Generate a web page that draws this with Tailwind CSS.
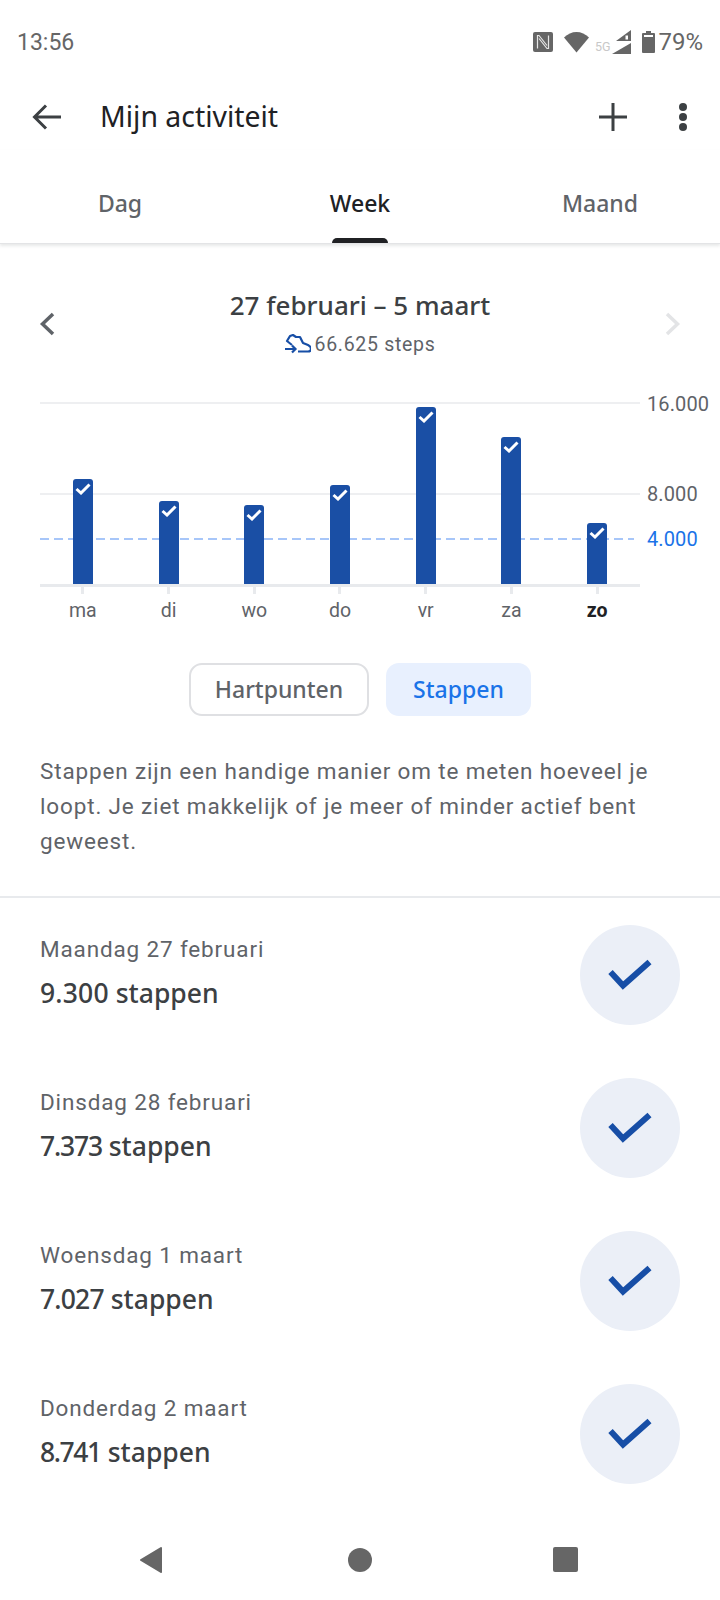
<!DOCTYPE html>
<html lang="en">
<head>
    <meta charset="UTF-8">
    <title>Mijn activiteit</title>
    <script src="https://cdn.jsdelivr.net/npm/@tailwindcss/browser@4"></script>
</head>
<body class="bg-white font-['Roboto',sans-serif] text-[#5f6368]">
<div class="w-[720px] h-[1600px] overflow-hidden relative">
    <!-- Status bar -->
    <div class="h-[84px] flex items-center justify-between pl-[17px] pr-[17px] text-[#666666]">
        <span class="text-[23px] mt-[3px]">13:56</span>
        <div class="flex items-center">
            <svg width="20" height="20" viewBox="0 0 20 20" class="mr-[11px]"><rect width="20" height="20" rx="2" fill="#666"/><path d="M4.500 16.500V3.500h1.500l8 10M15.500 3.500v13H14l-8-10" stroke="#e6e6e6" stroke-width="1.200" fill="none"/></svg>
            <svg width="25" height="22" viewBox="0 0 25 22" class="mr-[6px]"><path d="M0 6.500C3.500 3 8 1 12.500 1S21.500 3 25 6.500L12.500 21.500Z" fill="#666"/></svg>
            <span class="text-[12.5px] leading-[14px] text-[#c8c8c8] mt-[10px] mr-[2px]">5G</span>
            <svg width="19" height="24" viewBox="0 0 19 24" class="mr-[11px]"><path d="M19 0v11H4ZM13.500 5.500h2.500v4h-2.500Z" fill="#666" fill-rule="evenodd"/><path d="M19 13v11H0Z" fill="#666"/></svg>
            <svg width="13" height="22" viewBox="0 0 13 22" class="mr-[2px]"><path d="M4 0h5v2h3a1 1 0 0 1 1 1v18a1 1 0 0 1-1 1H1a1 1 0 0 1-1-1V3a1 1 0 0 1 1-1h3Z" fill="#666"/><rect x="2" y="4" width="9" height="2" fill="#fff"/></svg>
            <span class="text-[24px] ml-[1px]">79%</span>
        </div>
    </div>

    <!-- Toolbar -->
    <div class="h-[66px] flex items-center relative">
        <svg width="32" height="32" viewBox="0 0 32 32" class="ml-[31px]"><path d="M30 16H4M15 4.500 3.500 16 15 27.500" stroke="#3c4043" stroke-width="3" fill="none"/></svg>
        <h1 class="ml-[37px] mt-[-2px] text-[28.4px] text-[#202124] font-['Noto_Sans',sans-serif]">Mijn activiteit</h1>
        <div class="ml-auto flex items-center">
            <svg width="30" height="30" viewBox="0 0 30 30" class="mr-[51px]"><path d="M15 1v28M1 15h28" stroke="#3c4043" stroke-width="3" fill="none"/></svg>
            <div class="flex flex-col gap-[2px] mr-[33px]">
                <span class="w-[8px] h-[8px] rounded-full bg-[#3c4043]"></span>
                <span class="w-[8px] h-[8px] rounded-full bg-[#3c4043]"></span>
                <span class="w-[8px] h-[8px] rounded-full bg-[#3c4043]"></span>
            </div>
        </div>
    </div>

    <!-- Tabs -->
    <div class="relative h-[94px] pt-[13px] grid grid-cols-3 items-center text-center text-[23px] font-medium font-['Noto_Sans',sans-serif] border-b border-[#e3e4e6] shadow-[0_2px_3px_rgba(60,64,67,0.12)]">
        <span class="text-[#5f6368]">Dag</span>
        <span class="text-[#202124]">Week</span>
        <span class="text-[#5f6368]">Maand</span>
        <span class="absolute left-[332px] bottom-0 w-[56px] h-[5px] rounded-t-[5px] bg-[#202124]"></span>
    </div>

    <!-- Date range -->
    <div class="relative h-[146px] flex flex-col items-center">
        <p class="mt-[43px] text-[26px] leading-[36px] text-[#3c4043] font-medium font-['Noto_Sans',sans-serif]">27 februari – 5 maart</p>
        <div class="mt-[7px] flex items-center">
            <svg width="26" height="22" viewBox="0 0 26 22" class="mr-[4px]"><path d="M7 11 2 7l3-5 3-1 3 2h4l3 6 5 2c2 1 3 2.500 3 4 0 2-1 2.500-3 2.500H13" stroke="#174ea6" stroke-width="2.200" fill="none" stroke-linejoin="round"/><path d="M0 15h10M7 11.500 10.500 15 7 18.500" stroke="#174ea6" stroke-width="2.200" fill="none"/></svg>
            <span class="text-[19.5px] tracking-[0.7px]">66.625 steps</span>
        </div>
        <svg width="16" height="24" viewBox="0 0 16 24" class="absolute left-[39px] top-[68px]"><path d="M14 2 3.500 12 14 22" stroke="#5f6368" stroke-width="3.500" fill="none"/></svg>
        <svg width="16" height="24" viewBox="0 0 16 24" class="absolute left-[665px] top-[68px]"><path d="M2 2 12.500 12 2 22" stroke="#e3e4e6" stroke-width="3.500" fill="none"/></svg>
    </div>

    <!-- Chart -->
    <div class="relative h-[240px]">
        <div class="absolute left-[40px] top-[12px] w-[600px] h-[2px] bg-[#eeeff1]"></div>
        <div class="absolute left-[40px] top-[103px] w-[600px] h-[2px] bg-[#eeeff1]"></div>
        <svg width="594" height="2" class="absolute left-[40px] top-[148px]"><line x1="0" y1="1" x2="594" y2="1" stroke="#8ab4f8" stroke-width="1.500" stroke-dasharray="9 5"/></svg>
        <div class="absolute left-[40px] top-[194px] w-[600px] h-[3px] bg-[#e8eaed]"></div>

        <span class="absolute left-[647px] top-[2px] text-[20px] leading-[24px] tracking-[0.1px]">16.000</span>
        <span class="absolute left-[647px] top-[92px] text-[20px] leading-[24px] tracking-[0.1px]">8.000</span>
        <span class="absolute left-[647px] top-[137px] text-[20px] leading-[24px] tracking-[0.1px] text-[#1a73e8]">4.000</span>

        <div class="absolute left-[40px] top-0 w-[600px] grid grid-cols-7 text-center text-[19.5px] leading-[24px]">
            <div class="flex flex-col items-center">
                <div class="h-[194px] flex items-end">
                    <div class="w-[20px] h-[105px] rounded-t-[3px] bg-[#1a4fa5] flex justify-center pt-[3px]"><svg width="16" height="13" viewBox="0 0 16 13"><path d="M1.500 7 6 11 14.500 2.500" stroke="#fff" stroke-width="3" fill="none"/></svg></div>
                </div>
                <div class="mt-[3px] w-[3px] h-[7px] bg-[#e8eaed]"></div>
                <span class="mt-[5px]">ma</span>
            </div>
            <div class="flex flex-col items-center">
                <div class="h-[194px] flex items-end">
                    <div class="w-[20px] h-[83px] rounded-t-[3px] bg-[#1a4fa5] flex justify-center pt-[3px]"><svg width="16" height="13" viewBox="0 0 16 13"><path d="M1.500 7 6 11 14.500 2.500" stroke="#fff" stroke-width="3" fill="none"/></svg></div>
                </div>
                <div class="mt-[3px] w-[3px] h-[7px] bg-[#e8eaed]"></div>
                <span class="mt-[5px]">di</span>
            </div>
            <div class="flex flex-col items-center">
                <div class="h-[194px] flex items-end">
                    <div class="w-[20px] h-[79px] rounded-t-[3px] bg-[#1a4fa5] flex justify-center pt-[3px]"><svg width="16" height="13" viewBox="0 0 16 13"><path d="M1.500 7 6 11 14.500 2.500" stroke="#fff" stroke-width="3" fill="none"/></svg></div>
                </div>
                <div class="mt-[3px] w-[3px] h-[7px] bg-[#e8eaed]"></div>
                <span class="mt-[5px]">wo</span>
            </div>
            <div class="flex flex-col items-center">
                <div class="h-[194px] flex items-end">
                    <div class="w-[20px] h-[99px] rounded-t-[3px] bg-[#1a4fa5] flex justify-center pt-[3px]"><svg width="16" height="13" viewBox="0 0 16 13"><path d="M1.500 7 6 11 14.500 2.500" stroke="#fff" stroke-width="3" fill="none"/></svg></div>
                </div>
                <div class="mt-[3px] w-[3px] h-[7px] bg-[#e8eaed]"></div>
                <span class="mt-[5px]">do</span>
            </div>
            <div class="flex flex-col items-center">
                <div class="h-[194px] flex items-end">
                    <div class="w-[20px] h-[177px] rounded-t-[3px] bg-[#1a4fa5] flex justify-center pt-[3px]"><svg width="16" height="13" viewBox="0 0 16 13"><path d="M1.500 7 6 11 14.500 2.500" stroke="#fff" stroke-width="3" fill="none"/></svg></div>
                </div>
                <div class="mt-[3px] w-[3px] h-[7px] bg-[#e8eaed]"></div>
                <span class="mt-[5px]">vr</span>
            </div>
            <div class="flex flex-col items-center">
                <div class="h-[194px] flex items-end">
                    <div class="w-[20px] h-[147px] rounded-t-[3px] bg-[#1a4fa5] flex justify-center pt-[3px]"><svg width="16" height="13" viewBox="0 0 16 13"><path d="M1.500 7 6 11 14.500 2.500" stroke="#fff" stroke-width="3" fill="none"/></svg></div>
                </div>
                <div class="mt-[3px] w-[3px] h-[7px] bg-[#e8eaed]"></div>
                <span class="mt-[5px]">za</span>
            </div>
            <div class="flex flex-col items-center">
                <div class="h-[194px] flex items-end">
                    <div class="w-[20px] h-[61px] rounded-t-[3px] bg-[#1a4fa5] flex justify-center pt-[3px]"><svg width="16" height="13" viewBox="0 0 16 13"><path d="M1.500 7 6 11 14.500 2.500" stroke="#fff" stroke-width="3" fill="none"/></svg></div>
                </div>
                <div class="mt-[3px] w-[3px] h-[7px] bg-[#e8eaed]"></div>
                <span class="mt-[5px] font-bold text-[#202124]">zo</span>
            </div>
        </div>
    </div>

    <!-- Metric toggle -->
    <div class="mt-[33px] flex justify-center gap-[17px] text-[23px] font-medium font-['Noto_Sans',sans-serif]">
        <div class="w-[180px] h-[53px] flex items-center justify-center rounded-[13px] border-2 border-[#dfe0e3] text-[#5f6368]">Hartpunten</div>
        <div class="w-[145px] h-[53px] flex items-center justify-center rounded-[13px] bg-[#e8f0fe] text-[#1a73e8]">Stappen</div>
    </div>

    <!-- Description -->
    <p class="mt-[38px] ml-[40px] w-[640px] text-[22.5px] leading-[35px] tracking-[0.85px]">Stappen zijn een handige manier om te meten hoeveel je loopt. Je ziet makkelijk of je meer of minder actief bent geweest.</p>

    <div class="mt-[37px] h-[2px] bg-[#e8eaed]"></div>

    <!-- Day list -->
    <div>
        <div class="h-[153px] flex items-center justify-between pl-[40px] pr-[40px]">
            <div class="mt-[-8px]">
                <p class="text-[22.5px] leading-[32px] tracking-[0.85px]">Maandag 27 februari</p>
                <p class="mt-[12px] text-[26.5px] leading-[32px] font-medium text-[#3c4043] font-['Noto_Sans',sans-serif]"><span class="tracking-[0.2px]">9.300</span> stappen</p>
            </div>
            <div class="w-[100px] h-[100px] rounded-full bg-[#ebeff7] flex items-center justify-center"><svg width="44" height="32" viewBox="0 0 44 32"><path d="M2.500 13 15 26.500 41.500 3" stroke="#174ea6" stroke-width="6" fill="none"/></svg></div>
        </div>
        <div class="h-[153px] flex items-center justify-between pl-[40px] pr-[40px]">
            <div class="mt-[-8px]">
                <p class="text-[22.5px] leading-[32px] tracking-[0.85px]">Dinsdag 28 februari</p>
                <p class="mt-[12px] text-[26.5px] leading-[32px] font-medium text-[#3c4043] font-['Noto_Sans',sans-serif]"><span class="tracking-[-1.2px]">7.373</span> stappen</p>
            </div>
            <div class="w-[100px] h-[100px] rounded-full bg-[#ebeff7] flex items-center justify-center"><svg width="44" height="32" viewBox="0 0 44 32"><path d="M2.500 13 15 26.500 41.500 3" stroke="#174ea6" stroke-width="6" fill="none"/></svg></div>
        </div>
        <div class="h-[153px] flex items-center justify-between pl-[40px] pr-[40px]">
            <div class="mt-[-8px]">
                <p class="text-[22.5px] leading-[32px] tracking-[0.85px]">Woensdag 1 maart</p>
                <p class="mt-[12px] text-[26.5px] leading-[32px] font-medium text-[#3c4043] font-['Noto_Sans',sans-serif]"><span class="tracking-[-0.8px]">7.027</span> stappen</p>
            </div>
            <div class="w-[100px] h-[100px] rounded-full bg-[#ebeff7] flex items-center justify-center"><svg width="44" height="32" viewBox="0 0 44 32"><path d="M2.500 13 15 26.500 41.500 3" stroke="#174ea6" stroke-width="6" fill="none"/></svg></div>
        </div>
        <div class="h-[153px] flex items-center justify-between pl-[40px] pr-[40px]">
            <div class="mt-[-8px]">
                <p class="text-[22.5px] leading-[32px] tracking-[0.85px]">Donderdag 2 maart</p>
                <p class="mt-[12px] text-[26.5px] leading-[32px] font-medium text-[#3c4043] font-['Noto_Sans',sans-serif]"><span class="tracking-[-1.4px]">8.741</span> stappen</p>
            </div>
            <div class="w-[100px] h-[100px] rounded-full bg-[#ebeff7] flex items-center justify-center"><svg width="44" height="32" viewBox="0 0 44 32"><path d="M2.500 13 15 26.500 41.500 3" stroke="#174ea6" stroke-width="6" fill="none"/></svg></div>
        </div>
    </div>

    <!-- Navigation bar -->
    <div class="absolute left-0 bottom-0 w-full h-[100px] bg-white">
        <svg width="24" height="28" viewBox="0 0 24 28" class="absolute left-[139px] top-[46px]"><path d="M22 2 2 14l20 12Z" fill="#666" stroke="#666" stroke-width="2" stroke-linejoin="round"/></svg>
        <span class="absolute left-[348px] top-[48px] w-[24px] h-[24px] rounded-full bg-[#666666]"></span>
        <span class="absolute left-[553px] top-[47px] w-[25px] h-[25px] rounded-[2px] bg-[#666666]"></span>
    </div>
</div>
</body>
</html>
